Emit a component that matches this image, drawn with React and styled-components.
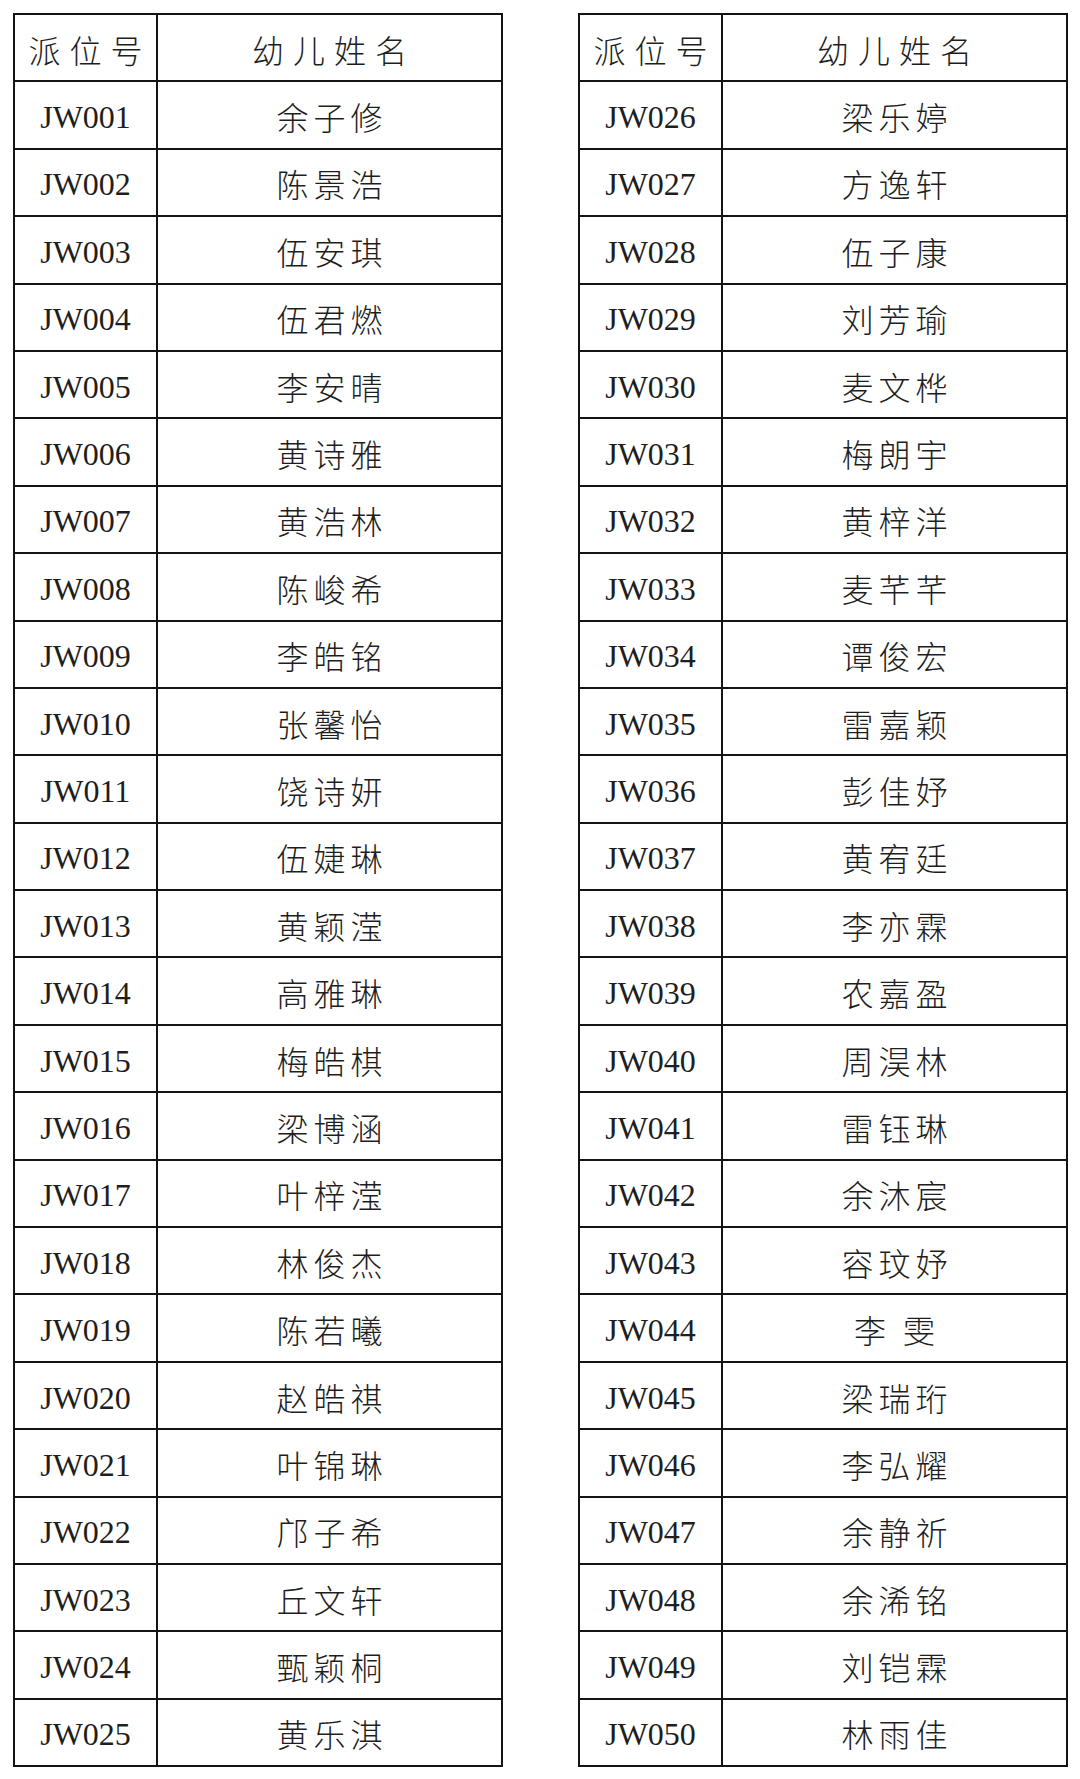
import React from "react";
import styled, { createGlobalStyle } from "styled-components";

const GlobalStyle = createGlobalStyle`
  html, body {
    margin: 0;
    padding: 0;
    background: #fff;
  }
`;

const Page = styled.div`
  width: 1080px;
  height: 1779px;
  box-sizing: border-box;
  padding: 13px 0 0 13px;
  display: flex;
  gap: 75px;
  align-items: flex-start;
  background: #fff;
`;

const Table = styled.table`
  border-collapse: collapse;
  width: 490px;
  table-layout: fixed;
  color: #1e1e1e;
`;

const Row = styled.tr`
  height: 67.4px;
`;

const Cell = styled.td`
  border: 2px solid #141414;
  text-align: center;
  vertical-align: middle;
  line-height: 1;
  padding: 4px 0 0;
  font-family: "Liberation Serif", "Noto Sans CJK SC", serif;
  font-size: 32px;
`;

const NameCell = styled(Cell)`
  font-family: "Noto Sans CJK SC", sans-serif;
  font-weight: 300;
  padding: 2px 0 0 ${(p) => (p.$head ? 9 : 5)}px;
  letter-spacing: ${(p) => (p.$head ? 9 : 5)}px;
`;

const IdCol = styled.col`
  width: 143px;
`;

const left = [
  "余子修", "陈景浩", "伍安琪", "伍君燃", "李安晴", "黄诗雅", "黄浩林",
  "陈峻希", "李皓铭", "张馨怡", "饶诗妍", "伍婕琳", "黄颖滢", "高雅琳",
  "梅皓棋", "梁博涵", "叶梓滢", "林俊杰", "陈若曦", "赵皓祺", "叶锦琳",
  "邝子希", "丘文轩", "甄颖桐", "黄乐淇",
];

const right = [
  "梁乐婷", "方逸轩", "伍子康", "刘芳瑜", "麦文桦", "梅朗宇", "黄梓洋",
  "麦芊芊", "谭俊宏", "雷嘉颖", "彭佳妤", "黄宥廷", "李亦霖", "农嘉盈",
  "周淏林", "雷钰琳", "余沐宸", "容玟妤", "李 雯", "梁瑞珩", "李弘耀",
  "余静祈", "余浠铭", "刘铠霖", "林雨佳",
];

function NameTable({ names, start }) {
  return (
    <Table>
      <colgroup>
        <IdCol />
        <col />
      </colgroup>
      <tbody>
        <Row>
          <NameCell $head>派位号</NameCell>
          <NameCell $head>幼儿姓名</NameCell>
        </Row>
        {names.map((name, i) => (
          <Row key={i}>
            <Cell>JW{String(start + i).padStart(3, "0")}</Cell>
            <NameCell>{name}</NameCell>
          </Row>
        ))}
      </tbody>
    </Table>
  );
}

export default function App() {
  return (
    <>
      <GlobalStyle />
      <Page>
        <NameTable names={left} start={1} />
        <NameTable names={right} start={26} />
      </Page>
    </>
  );
}
